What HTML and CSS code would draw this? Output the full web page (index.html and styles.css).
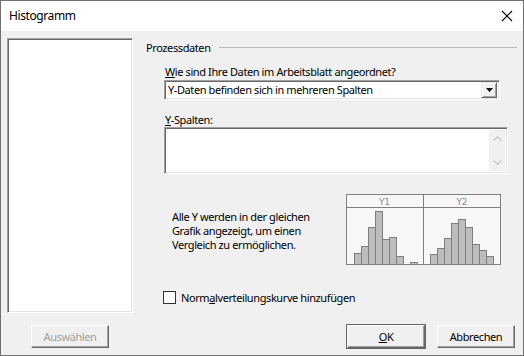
FILE: index.html
```html
<!DOCTYPE html>
<html>
<head>
  <meta charset="utf-8">
  <title>Histogramm</title>
  <link rel="stylesheet" href="styles.css">
</head>
<body>
  <div class="window">
    <div class="titlebar">
      <span class="title">Histogramm</span>
      <svg class="close" width="12" height="12" viewBox="0 0 12 12">
        <path d="M1 1L11 11M11 1L1 11" stroke="#000" stroke-width="1.1" fill="none"/>
      </svg>
    </div>

    <div class="dialog">
      <div class="main">
        <div class="listbox sunken"></div>

        <div class="panel">
          <div class="group-title"><span>Prozessdaten</span></div>

          <div class="label"><u>W</u>ie sind Ihre Daten im Arbeitsblatt angeordnet?</div>
          <div class="combo sunken">
            <span class="combo-text">Y-Daten befinden sich in mehreren Spalten</span>
            <span class="combo-btn">
              <svg width="7" height="4" viewBox="0 0 7 4"><path d="M0 0H7L3.5 4Z" fill="#000"/></svg>
            </span>
          </div>

          <div class="label label-spalten"><u>Y</u>-Spalten:</div>
          <div class="textbox sunken">
            <div class="scroll">
              <svg width="9" height="5" viewBox="0 0 9 5"><path d="M0.5 4.5L4.5 0.8L8.5 4.5" stroke="#c4c4c4" stroke-width="1.3" fill="none"/></svg>
              <svg width="9" height="5" viewBox="0 0 9 5"><path d="M0.5 0.5L4.5 4.2L8.5 0.5" stroke="#c4c4c4" stroke-width="1.3" fill="none"/></svg>
            </div>
          </div>

          <div class="preview">
            <p class="desc">Alle Y werden in der gleichen<br>Grafik angezeigt, um einen<br>Vergleich zu ermöglichen.</p>
            <svg class="hist" width="155" height="71" viewBox="0 0 155 71">
              <rect x="0.5" y="0.5" width="154" height="70" fill="#f7f7f7" stroke="#808080"/>
              <line x1="0" y1="13.5" x2="155" y2="13.5" stroke="#808080"/>
              <line x1="77.5" y1="0" x2="77.5" y2="71" stroke="#808080"/>
              <text x="38.5" y="10.5" class="hist-label">Y1</text>
              <text x="116" y="10.5" class="hist-label">Y2</text>
              <g fill="#bdbdbd" stroke="#7f7f7f">
                <rect x="8.5" y="59.5" width="7" height="11"/>
                <rect x="15.5" y="52.5" width="7" height="18"/>
                <rect x="22.5" y="33.5" width="7" height="37"/>
                <rect x="29.5" y="17.5" width="7" height="53"/>
                <rect x="36.5" y="45.5" width="7" height="25"/>
                <rect x="43.5" y="43.5" width="7" height="27"/>
                <rect x="50.5" y="62.5" width="7" height="8"/>
                <rect x="64.5" y="68.5" width="7" height="2"/>

                <rect x="84.5" y="60.5" width="7" height="10"/>
                <rect x="91.5" y="54.5" width="7" height="16"/>
                <rect x="98.5" y="44.5" width="7" height="26"/>
                <rect x="105.5" y="29.5" width="7" height="41"/>
                <rect x="112.5" y="25.5" width="7" height="45"/>
                <rect x="119.5" y="33.5" width="7" height="37"/>
                <rect x="126.5" y="50.5" width="7" height="20"/>
                <rect x="133.5" y="56.5" width="7" height="14"/>
                <rect x="140.5" y="62.5" width="7" height="8"/>
              </g>
            </svg>
          </div>

          <label class="check">
            <span class="checkbox"></span>
            <span>Norm<u>a</u>lverteilungskurve hinzufügen</span>
          </label>
        </div>
      </div>

      <div class="footer">
        <div class="footer-left">
          <button class="button" disabled>Auswählen</button>
        </div>
        <div class="footer-right">
          <button class="button default"><u>O</u>K</button>
          <button class="button">Abbrechen</button>
        </div>
      </div>
    </div>
  </div>
</body>
</html>
```

FILE: styles.css
```css
html, body {
  margin: 0;
  padding: 0;
}
body {
  font-family: "Noto Sans", "Open Sans", sans-serif;
  font-size: 11px;
  letter-spacing: -0.4px;
  color: #000;
  background: #f0f0f0;
}
.window {
  width: 524px;
  height: 356px;
  box-sizing: border-box;
  border: 1px solid #707070;
  background: #f0f0f0;
  display: flex;
  flex-direction: column;
}
.titlebar {
  height: 30px;
  background: #fff;
  display: flex;
  align-items: center;
  padding: 0 9px 0 8px;
}
.title {
  flex: 1;
  font-size: 12px;
  letter-spacing: -0.4px;
  margin-top: -1px;
}
.close {
  margin-right: 1px;
}
.dialog {
  flex: 1;
  padding: 7px 6px 0 6px;
}
.main {
  display: flex;
  height: 275px;
}

/* sunken 3D border */
.sunken {
  box-sizing: border-box;
  border: 1px solid;
  border-color: #a0a0a0 #fff #fff #a0a0a0;
  box-shadow: inset 1px 1px 0 #696969, inset -1px -1px 0 #e3e3e3;
  background: #fff;
}
.listbox {
  width: 126px;
  height: 275px;
}
.panel {
  flex: 1;
  margin-left: 13px;
}
.group-title {
  height: 18px;
  display: flex;
  align-items: center;
}
.group-title::after {
  content: "";
  flex: 1;
  margin-left: 8px;
  border-top: 1px solid #b9b9b9;
  margin-top: 1px;
}
.label {
  margin: 8px 0 0 19px;
  line-height: 16px;
  height: 16px;
}
.label-spalten {
  margin-top: 12px;
  line-height: 15px;
  height: 15px;
}
.combo {
  margin-left: 18px;
  width: 336px;
  height: 20px;
  display: flex;
  align-items: center;
  padding: 2px;
}
.combo-text {
  flex: 1;
  padding-left: 1px;
  line-height: 16px;
}
.combo-btn {
  width: 16px;
  height: 16px;
  box-sizing: border-box;
  background: #f0f0f0;
  border: 1px solid;
  border-color: #e3e3e3 #696969 #696969 #e3e3e3;
  box-shadow: inset 1px 1px 0 #fff, inset -1px -1px 0 #a0a0a0;
  display: flex;
  align-items: center;
  justify-content: center;
}
.textbox {
  margin-left: 18px;
  width: 344px;
  height: 47px;
  padding: 2px;
  display: flex;
  justify-content: flex-end;
}
.scroll {
  width: 16px;
  background: #f0f0f0;
  display: flex;
  flex-direction: column;
  justify-content: space-between;
  align-items: center;
  padding: 6px 0;
}
.preview {
  margin-top: 20px;
  display: flex;
  align-items: center;
}
.desc {
  margin: 0 0 0 26px;
  padding-top: 3px;
  width: 174px;
  line-height: 14px;
}
.hist {
  display: block;
}
.hist-label {
  font-family: "DejaVu Sans", sans-serif;
  font-size: 9px;
  letter-spacing: 0;
  fill: #8c8c8c;
  text-anchor: middle;
}
.check {
  margin: 26px 0 0 17px;
  display: flex;
  align-items: center;
  height: 13px;
}
.checkbox {
  width: 13px;
  height: 13px;
  box-sizing: border-box;
  border: 1px solid #333;
  background: #fff;
  margin-right: 5px;
}
.footer {
  margin-top: 12px;
  display: flex;
}
.footer-left {
  width: 126px;
  display: flex;
  justify-content: center;
}
.footer-right {
  margin-left: auto;
  margin-right: 2px;
  display: flex;
  gap: 12px;
}
.button {
  width: 78px;
  height: 23px;
  font-family: inherit;
  font-size: 11px;
  letter-spacing: -0.4px;
  color: #000;
  background: #f0f0f0;
  border: 1px solid;
  border-color: #fff #696969 #696969 #fff;
  box-shadow: inset -1px -1px 0 #a0a0a0;
  padding: 0;
}
.button:disabled {
  color: #a0a0a0;
}
.button.default {
  box-shadow: inset -1px -1px 0 #a0a0a0, 0 0 0 1px #646464;
}
```
